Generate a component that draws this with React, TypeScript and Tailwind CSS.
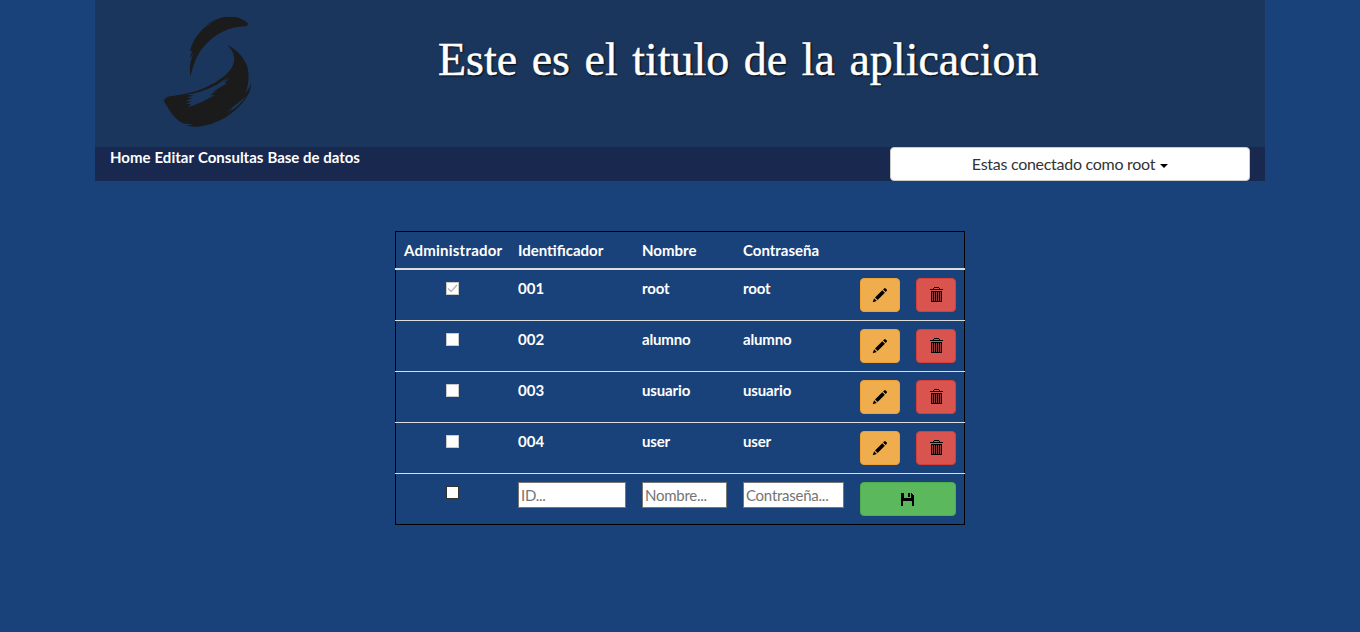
import React from "react";

const users = [
  { id: "001", name: "root", pass: "root", admin: true },
  { id: "002", name: "alumno", pass: "alumno", admin: false },
  { id: "003", name: "usuario", pass: "usuario", admin: false },
  { id: "004", name: "user", pass: "user", admin: false },
];

const columns = "grid grid-cols-[115px_124px_101px_117px_56px_57px]";

function Logo() {
  return (
    <svg className="h-[140px] w-[120px]" viewBox="0 0 360 420" fill="#1b1b1b">
      <path d="M164 76 C180 66 198 57 222 51 L258 51 C274 55 286 62 294 70 L291 79 C266 79 240 84 218 95 C186 110 158 138 141 170 C131 190 126 210 122 229 C118 214 119 196 123 181 L131 158 L121 174 C121 166 123 160 127 152 L120 153 C130 117 150 88 184 68 L200 62 C188 65 176 70 164 76Z" />
      <path d="M232 135 C260 148 284 174 293 204 C298 228 296 255 286 282 L299 262 L303 248 C304 264 299 278 290 291 C274 318 247 341 218 357 C187 373 157 381 132 380 L107 377 L128 374 C116 371 108 373 99 370 C79 360 62 340 51 318 C45 309 41 306 42 301 C47 290 57 288 73 287 C101 282 132 277 157 266 C185 256 213 238 232 220 C249 202 256 183 251 166 C248 153 241 144 232 135Z" />
      <path fill="#1a365c" d="M128 281 C154 276 184 264 208 250 L238 228 L221 243 L241 234 L222 249 L232 248 L212 261 L188 275 L204 272 L180 286 L196 284 L160 304 L132 316 L114 321 L124 311 L108 312 L124 303 L106 304 L126 295 L110 292 L131 287 L110 283Z" />
      <path d="M188 279 C206 275 222 266 242 250 C229 271 208 282 186 286Z" />
      <path fill="#1a365c" d="M241 326 C262 311 280 296 289 287 C277 307 258 324 234 338 L248 325 L223 336Z" />
    </svg>
  );
}

function Pencil() {
  return (
    <svg className="h-[16px] w-[16px]" viewBox="0 0 16 16">
      <path d="M.7 15.3 L2.1 11.3 L4.8 14Z M3 10.4 L10.3 3.2 L12.9 5.7 L5.6 13Z M11.1 2.4 L12.4 1.2 Q13 .8 13.6 1.4 L14.8 2.6 Q15.3 3.1 14.8 3.7 L13.7 4.9Z" />
    </svg>
  );
}

function Trash() {
  return (
    <svg className="h-[16px] w-[14px]" viewBox="0 0 14 16" shapeRendering="crispEdges">
      <path d="M5 0h5v1h1v1h3v1H1V2h3V1h1zM5 1v1h5V1z" fillRule="evenodd" />
      <path d="M3 4h9v10H3z" fillOpacity="0.3" />
      <path d="M2 4h11v1H2zM2 5h1v9H2zM4 5h1v9H4zM6 5h1v9H6zM8 5h1v9H8zM10 5h1v9h-1zM12 5h1v9h-1zM2 14h11v1H2z" />
    </svg>
  );
}

function Floppy() {
  return (
    <svg className="mr-px h-[13px] w-[13px]" viewBox="0 0 13 13" shapeRendering="crispEdges">
      <path d="M0 0H3V5H10V0H11V1H12V2H13V13H11V8H2V13H0ZM7 0H9V4H7Z" />
    </svg>
  );
}

function Check({ checked = false, active = false }) {
  return (
    <span className={`mt-3 ml-[51px] block h-[13px] w-[13px] border bg-white ${active ? "border-[#333]" : "border-[#c8c8c8]"}`}>
      {checked && (
        <svg className="h-[11px] w-[11px]" viewBox="0 0 11 11" fill="none" stroke="#b5b5b5" strokeWidth="1.4">
          <path d="M1 5.5 4 8.5 10 2" />
        </svg>
      )}
    </span>
  );
}

const field = "mt-2 ml-2 h-[26px] rounded-none border border-[#767676] bg-white px-[2px] text-[15px] tracking-[-0.25px] placeholder:text-[#757575] placeholder:opacity-100";

export default function App() {
  return (
    <div className="min-h-[632px] bg-[#1a427a] font-['Lato',sans-serif] text-[15px] leading-[20px] text-white">
      <div className="mx-auto w-[1170px]">
        <header className="flex h-[147px] bg-[#1a365c] pl-[55px]">
          <Logo />
          <h1 className="mt-[32px] ml-[168px] whitespace-nowrap font-['Liberation_Serif',serif] text-[46px] leading-[56px] [word-spacing:3px] [-webkit-text-stroke:0.45px_white] [text-shadow:1px_1px_2px_black]">
            Este es el titulo de la aplicacion
          </h1>
        </header>
        <nav className="flex h-[34px] justify-between bg-[#18284f] pr-[15px] pl-[15px]">
          <div className="flex gap-1 font-bold whitespace-nowrap">
            <a>Home</a>
            <a>Editar</a>
            <a>Consultas</a>
            <a>Base de datos</a>
          </div>
          <button className="flex h-[34px] w-[360px] items-center justify-center rounded-[4px] border border-[#ccc] bg-white text-[16px] tracking-[-0.28px] text-[#333]">
            <span>Estas conectado como root</span>
            <span className="mt-[3px] ml-[5px] border-x-4 border-t-4 border-x-transparent border-t-black" />
          </button>
        </nav>
      </div>
      <div className="mx-auto mt-[50px] flex h-[294px] w-[570px] flex-col border-y border-black shadow-[inset_1px_0_black,inset_-1px_0_black]">
        <div className={`${columns} h-[38px] shrink-0 border-b-2 border-[#ddd] pt-[8px] font-bold`}>
          <span className="pl-[9px] tracking-[0.23px]">Administrador</span>
          <span className="pl-2">Identificador</span>
          <span className="pl-2">Nombre</span>
          <span className="pl-2">Contraseña</span>
        </div>
        {users.map((u) => (
          <div key={u.id} className={`${columns} h-[51px] shrink-0 border-b border-[#ddd] font-bold`}>
            <Check checked={u.admin} />
            <span className="pt-[8px] pl-2">{u.id}</span>
            <span className="pt-[8px] pl-2 tracking-[-0.15px]">{u.name}</span>
            <span className="pt-[8px] pl-2 tracking-[-0.15px]">{u.pass}</span>
            <button className="mt-2 ml-2 flex h-[34px] w-10 items-center justify-center rounded-[4px] border border-[#eea236] bg-[#f0ad4e]">
              <Pencil />
            </button>
            <button className="mt-2 ml-2 flex h-[34px] w-10 items-center justify-center rounded-[4px] border border-[#d43f3a] bg-[#d9534f]">
              <Trash />
            </button>
          </div>
        ))}
        <div className={`${columns} h-[50px] shrink-0`}>
          <Check active />
          <input className={`${field} w-[108px]`} placeholder="ID..." />
          <input className={`${field} w-[85px]`} placeholder="Nombre..." />
          <input className={`${field} w-[101px]`} placeholder="Contraseña..." />
          <button className="col-span-2 mt-2 ml-2 flex h-[34px] w-24 items-center justify-center rounded-[4px] border border-[#4cae4c] bg-[#5cb85c]">
            <Floppy />
          </button>
        </div>
      </div>
    </div>
  );
}
